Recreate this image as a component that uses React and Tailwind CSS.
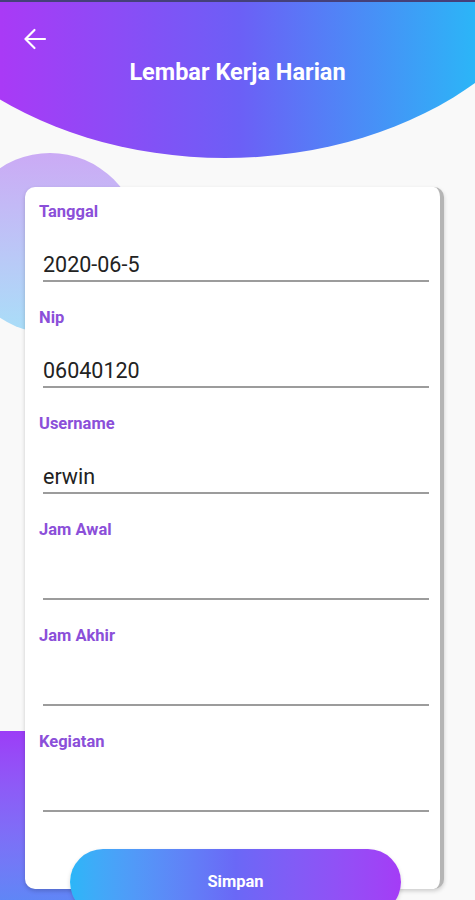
import React from "react";

const fields = [
  { label: "Tanggal", value: "2020-06-5" },
  { label: "Nip", value: "06040120" },
  { label: "Username", value: "erwin" },
  { label: "Jam Awal", value: "" },
  { label: "Jam Akhir", value: "" },
  { label: "Kegiatan", value: "" },
];

export default function App() {
  return (
    <div
      className="relative w-[475px] h-[900px] overflow-hidden bg-[#f9f9f9]"
      style={{ fontFamily: "Roboto, 'Noto Sans', sans-serif" }}
    >
      {/* decorative header ellipse */}
      <div className="absolute left-[-135px] top-[-376px] w-[720px] h-[534px] rounded-[50%] bg-[linear-gradient(90deg,#a93af6_19%,#6c5ff6_52%,#2bb6f7_85%)]" />
      <div className="absolute left-0 top-0 w-full h-[2px] bg-[#45407a]" />
      {/* decorative left circle */}
      <div className="absolute left-[-40px] top-[153px] w-[180px] h-[180px] rounded-full bg-gradient-to-b from-[#cbaaf5] to-[#a8def8]" />
      {/* decorative bottom-left block */}
      <div className="absolute left-0 top-[731px] w-[200px] h-[200px] rounded-tr-[6px] bg-gradient-to-b from-[#9c3cf7] to-[#4a90f6]" />

      <div className="relative z-10 flex flex-col">
        <header className="h-[187px] flex flex-col">
          <div className="pt-[24px] pl-[20px]">
            <svg width="30" height="30" viewBox="0 0 24 24" fill="none" stroke="white" strokeWidth="1.7" strokeLinecap="round" strokeLinejoin="round">
              <path d="M20 12H4.6" />
              <path d="M11.6 4.8L4.4 12l7.2 7.2" />
            </svg>
          </div>
          <h1 className="mt-[3px] text-center text-white font-bold text-[23.5px] leading-[30px]">
            Lembar Kerja Harian
          </h1>
        </header>

        <div className="ml-[25px] w-[419px] bg-white rounded-[10px] border-r-4 border-[#b5b5b5] shadow-[0_2px_4px_rgba(0,0,0,0.18)] pl-[14px] pr-[11px] pt-[16px] pb-[77px] flex flex-col gap-[27px]">
          {fields.map((f) => (
            <div key={f.label} className="flex flex-col">
              <div className="text-[16.5px] leading-[18px] font-bold text-[#8b4fd9]">{f.label}</div>
              <div className="mt-[29px] ml-[4px] h-[32px] border-b-2 border-[#9c9c9c] text-[21.5px] leading-[30px] text-[#222]">
                {f.value}
              </div>
            </div>
          ))}
        </div>

        <div className="-mt-[40px] ml-[70px] w-[331px] h-[66px] rounded-full bg-gradient-to-r from-[#2bb6f8] via-[#6a68f6] to-[#a43cf6] flex items-center justify-center text-white font-bold text-[16.5px] shadow-[0_2px_4px_rgba(0,0,0,0.15)]">
          Simpan
        </div>
      </div>
    </div>
  );
}
